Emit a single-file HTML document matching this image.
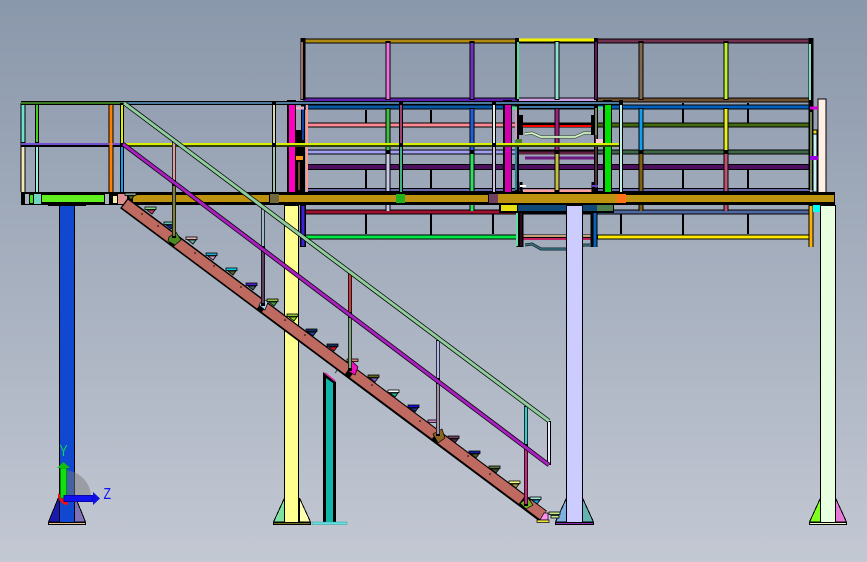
<!DOCTYPE html>
<html><head><meta charset="utf-8"><style>
html,body{margin:0;padding:0;width:867px;height:562px;overflow:hidden;background:#a5afbf}
svg{display:block}
.k path,.k rect,.k polygon{shape-rendering:crispEdges}
text{font-family:"Liberation Sans","DejaVu Sans",sans-serif}
</style></head><body>
<svg width="867" height="562" viewBox="0 0 867 562" xmlns="http://www.w3.org/2000/svg">
<defs><linearGradient id="bg" x1="0" y1="0" x2="0" y2="1"><stop offset="0" stop-color="#8a98ab"/><stop offset="1" stop-color="#c3c8d3"/></linearGradient></defs>
<rect width="867" height="562" fill="url(#bg)"/>

<g class="k" fill="none">
<!-- black bricks -->
<path stroke="#000" stroke-width="2" d="M366 110V123M431 110V125M366 170V190M431 170V190M366 214V234M431 214V236M493 214V234M683 103V125M748 103V124M683 170V190M748 170V190M621 214V234M683 214V236M748 214V234"/>
<!-- rear horizontal black casings -->
<path stroke="#000" stroke-width="5" d="M303 41H810M303 100H810M303 107H810M308 125H810M308 152H810M303 212H810M303 237H810"/>
<path stroke="#000" stroke-width="6" d="M308 167H810"/>
<path stroke="#000" stroke-width="4" d="M308 190H810"/>
<!-- top rails -->
<path stroke="#b08a10" stroke-width="3" d="M303 41H517"/>
<path stroke="#f0f000" stroke-width="3" d="M519 40H596"/>
<path stroke="#703050" stroke-width="3" d="M598 41H810"/>
<path stroke="#6020b0" stroke-width="3" d="M303 100H517"/>
<path stroke="#d0a0e8" stroke-width="3" d="M519 100H596"/>
<path stroke="#705030" stroke-width="3" d="M598 100H810"/>
<path stroke="#0858a8" stroke-width="3" d="M303 107H517"/>
<path stroke="#4078a8" stroke-width="2" d="M519 107H596"/>
<path stroke="#0060c0" stroke-width="3" d="M598 107H810"/>
<path stroke="#ff8a96" stroke-width="3" d="M308 125H517"/>
<path stroke="#ff0000" stroke-width="2" d="M519 126H596"/>
<path stroke="#446a10" stroke-width="3" d="M598 125H810"/>
<path stroke="#a0a0f0" stroke-width="3" d="M308 152H517"/>
<path stroke="#602040" stroke-width="3" d="M519 153H596"/>
<path stroke="#406848" stroke-width="3" d="M598 152H810"/>
<path stroke="#501060" stroke-width="4" d="M308 167H810"/>
<path stroke="#701880" stroke-width="3" d="M525 158H596"/>
<path stroke="#6468a8" stroke-width="2" d="M308 190H810"/>
<path stroke="#ffa09a" stroke-width="3" d="M523 191H596"/>
<path stroke="#a01030" stroke-width="3" d="M303 212H517"/>
<path stroke="#5068a0" stroke-width="3" d="M598 212H810"/>
<path stroke="#00e848" stroke-width="3" d="M303 237H517"/>
<path stroke="#c8a078" stroke-width="2" d="M519 236H596"/>
<path stroke="#c02060" stroke-width="2" d="M519 239H596"/>
<path stroke="#ffe800" stroke-width="3" d="M598 237H810"/>
<!-- rear upright casings -->
<path stroke="#000" stroke-width="5" d="M388 41V100M472 41V100M557 41V100M641 41V100M726 41V100"/>
<path stroke="#000" stroke-width="5" d="M388 108V192M472 108V192M557 108V192M641 108V192M726 108V192M388 205V211M472 205V211M641 205V211M726 205V211"/>
<path stroke="#f070e0" stroke-width="3" d="M388 43V99"/>
<path stroke="#7030c0" stroke-width="3" d="M472 43V99"/>
<path stroke="#90e0d0" stroke-width="3" d="M557 42V99"/>
<path stroke="#806848" stroke-width="3" d="M641 43V99"/>
<path stroke="#c0f030" stroke-width="3" d="M726 43V99"/>
<path stroke="#40c040" stroke-width="3" d="M388 109V150"/>
<path stroke="#c8c8e8" stroke-width="3" d="M388 154V191M388 205V211"/>
<path stroke="#2060e0" stroke-width="3" d="M472 109V150"/>
<path stroke="#30e060" stroke-width="3" d="M472 154V191M472 205V211"/>
<path stroke="#a02080" stroke-width="3" d="M557 109V150"/>
<path stroke="#c8c040" stroke-width="3" d="M557 154V190"/>
<path stroke="#10a0f0" stroke-width="3" d="M641 109V150"/>
<path stroke="#806010" stroke-width="3" d="M641 154V191M641 205V211"/>
<path stroke="#e8f020" stroke-width="3" d="M726 109V150"/>
<path stroke="#c05070" stroke-width="3" d="M726 154V191M726 205V211"/>
<!-- left rear post -->
<path stroke="#000" stroke-width="5" d="M303 38V100"/>
<path stroke="#a07060" stroke-width="2" d="M302 42V99"/>
<path stroke="#000" stroke-width="4" d="M303 104V192"/>
<path stroke="#1040a0" stroke-width="2" d="M303 108V140"/>
<path stroke="#000" stroke-width="6" d="M299 130V192"/>
<path stroke="#704828" stroke-width="2" d="M299 162V190"/>
<path stroke="#ff9a10" stroke-width="4" d="M296 158H303"/>
<path stroke="#e8b0c8" stroke-width="3" d="M296 108H304"/>
<path stroke="#000" stroke-width="6" d="M303 205V247"/>
<path stroke="#4020e0" stroke-width="3" d="M303 206V246"/>
<path stroke="#ff9a90" stroke-width="2" d="M307 104V191"/>
<!-- center dark posts -->
<path stroke="#000" stroke-width="4" d="M517 38V100M596 38V100"/>
<path stroke="#50e090" stroke-width="2" d="M518 42V99"/>
<path stroke="#601860" stroke-width="2" d="M596 42V99"/>
<path stroke="#000" stroke-width="4" d="M517 104V192M596 104V192"/>
<path stroke="#d098c0" stroke-width="2" d="M516 108V140"/>
<path stroke="#208098" stroke-width="2" d="M516 140V190"/>
<path stroke="#708060" stroke-width="2" d="M596 108V135"/>
<path stroke="#503040" stroke-width="2" d="M596 135V188"/>
<path stroke="#000" stroke-width="4" d="M521 115V135M593 115V135"/>
<path stroke="#000" stroke-width="3" d="M521 182V192M593 182V192"/>
<path stroke="#000" stroke-width="7" d="M520 205V247M594 205V247"/>
<path stroke="#60e0a0" stroke-width="2" d="M517 206V246"/>
<path stroke="#2a0a20" stroke-width="2" d="M521 210V246"/>
<path stroke="#0860b8" stroke-width="3" d="M595 208V247"/>
<path stroke="#50e080" stroke-width="3" d="M512 108H517M598 108H603"/>
<path stroke="#4e7a30" stroke-width="4" d="M516 141H522"/>
<path stroke="#ffc8d8" stroke-width="4" d="M596 141H603"/>
<path stroke="#fff" stroke-width="2" d="M520 186H526"/>
<path stroke="#6040c0" stroke-width="2" d="M592 186H598"/>
<!-- right end -->
<path stroke="#000" stroke-width="5" d="M811 38V190"/>
<path stroke="#80e0c0" stroke-width="2" d="M810 44V100"/>
<path stroke="#708050" stroke-width="2" d="M811 112V190"/>
<rect x="818" y="99" width="8" height="94" fill="#ffefe5" stroke="#000"/>
<rect x="813" y="131" width="4" height="61" fill="#c8f4f4" stroke="#000"/>
<rect x="813" y="130" width="4" height="4" fill="#f0e020" stroke="#000"/>
<path stroke="#d000d0" stroke-width="3" d="M810 108H818"/>
<path stroke="#a000e0" stroke-width="4" d="M810 158H818"/>
<path stroke="#000" stroke-width="5" d="M811 205V247"/>
<path stroke="#ffb000" stroke-width="3" d="M811 206V247"/>
<!-- magenta and green columns -->
<rect x="287" y="100" width="9" height="93" fill="#000"/><rect x="289" y="102" width="6" height="91" fill="#ff00c0"/>
<rect x="503" y="100" width="9" height="93" fill="#000"/><rect x="505" y="102" width="6" height="91" fill="#d000b0"/>
<rect x="603" y="100" width="9" height="93" fill="#000"/><rect x="605" y="102" width="6" height="91" fill="#00e000"/>
<!-- front rail, mid rail -->
<path stroke="#000" stroke-width="4" d="M123 103H620"/>
<path stroke="#4c7a9c" stroke-width="2" d="M123 103H620"/>
<path stroke="#30400c" stroke-width="4" d="M123 145H620"/>
<path stroke="#d8f000" stroke-width="2" d="M123 144H620"/>
<!-- front posts -->
<path stroke="#000" stroke-width="4" d="M274 102V192M401 102V192M494 102V192M621 100V192"/>
<path stroke="#d8d8b0" stroke-width="2" d="M274 105V143"/>
<path stroke="#a0c0b0" stroke-width="2" d="M274 147V192"/>
<path stroke="#a04070" stroke-width="2" d="M401 105V143"/>
<path stroke="#40b080" stroke-width="2" d="M401 147V192"/>
<path stroke="#e0f0e8" stroke-width="2" d="M494 105V143"/>
<path stroke="#d0c0e0" stroke-width="2" d="M494 147V192"/>
<path stroke="#c0f0e0" stroke-width="2" d="M621 105V192"/>
<!-- left bay -->
<path stroke="#000" stroke-width="5" d="M23 103V192M111 103V192"/>
<path stroke="#000" stroke-width="4" d="M37 103V192"/>
<path stroke="#000" stroke-width="4" d="M21 103H123"/>
<path stroke="#3a7a20" stroke-width="2" d="M21 103H123"/>
<path stroke="#000" stroke-width="4" d="M21 145H123"/>
<path stroke="#7050d0" stroke-width="2" d="M21 144H123"/>
<path stroke="#70e0d0" stroke-width="3" d="M23 105V142"/>
<path stroke="#f0e8b8" stroke-width="3" d="M23 147V192"/>
<path stroke="#40d020" stroke-width="2" d="M37 105V142"/>
<path stroke="#a0f0e0" stroke-width="2" d="M37 147V194"/>
<path stroke="#ff8000" stroke-width="3" d="M111 105V192"/>
<path stroke="#000" stroke-width="4" d="M122 103V192"/>
<path stroke="#e0f000" stroke-width="2" d="M122 105V143"/>
<path stroke="#10a0f0" stroke-width="2" d="M122 147V204"/>
<!-- deck -->
<rect x="21" y="192" width="814" height="13" fill="#000"/>
<rect x="133" y="195" width="136" height="7" fill="#bc920e"/>
<rect x="279" y="195" width="209" height="7" fill="#bc920e"/>
<rect x="498" y="194" width="119" height="9" fill="#bc920e"/>
<rect x="626" y="195" width="208" height="7" fill="#bc920e"/>
<rect x="270" y="194" width="9" height="9" fill="#706840"/>
<rect x="396" y="194" width="9" height="9" fill="#20b020"/>
<rect x="489" y="194" width="9" height="9" fill="#704060"/>
<rect x="617" y="194" width="9" height="9" fill="#ff7018"/>
<rect x="25" y="194" width="4" height="10" fill="#a8b4c0"/>
<rect x="30" y="195" width="3" height="8" fill="#40e020"/>
<rect x="34" y="194" width="7" height="10" fill="#70d8c0"/>
<rect x="42" y="195" width="62" height="7" fill="#60f020"/>
<rect x="105" y="194" width="4" height="10" fill="#a8b4c0"/>
<rect x="113" y="196" width="4" height="7" fill="#f8f0a0"/>
<rect x="118" y="194" width="9" height="10" fill="#e09090"/>
<!-- under deck blocks -->
<rect x="499" y="205" width="115" height="8" fill="#000"/>
<rect x="501" y="205" width="16" height="6" fill="#e8e010"/>
<rect x="518" y="205" width="49" height="6" fill="#104878"/>
<rect x="583" y="205" width="14" height="6" fill="#104878"/>
<rect x="597" y="205" width="16" height="6" fill="#508050"/>
<rect x="813" y="205" width="8" height="7" fill="#00ffff"/>
<rect x="48" y="205" width="38" height="1" fill="#000"/>
</g>

<!-- wave lines -->
<g fill="none">
<path d="M525 134L532 133L541 137H575L584 133H591" stroke="#28402a" stroke-width="3"/>
<path d="M525 134L532 133L541 137H575L584 133H591" stroke="#d8f4c8" stroke-width="1.800"/>
<path d="M525 245L532 244L541 249H575L584 245H591" stroke="#122a30" stroke-width="3"/>
<path d="M525 245L532 244L541 249H575L584 245H591" stroke="#387080" stroke-width="1.500"/>
</g>

<!-- columns and bases -->
<g class="k" stroke="#000">
<rect x="59.500" y="205.500" width="15" height="318" fill="#1048d0"/>
<polygon points="59.500,495 59.500,522 48.500,522" fill="#1a1ab0"/>
<polygon points="74.500,495 74.500,522 85.500,522" fill="#8070b8"/>
<rect x="48.500" y="522.500" width="37" height="2" fill="#e8c090"/>

<rect x="284.500" y="205.500" width="14" height="318" fill="#ffff90"/>
<polygon points="284.500,498 284.500,522 273.500,522" fill="#80e0a0"/>
<polygon points="299.500,498 299.500,522 310.500,522" fill="#ffffb0"/>
<rect x="273.500" y="522.500" width="37" height="2" fill="#707020"/>

<rect x="566.500" y="205.500" width="16" height="318" fill="#ccccff"/>
<polygon points="566.500,498 566.500,522 555.500,522" fill="#80b0e0"/>
<polygon points="582.500,498 582.500,522 593.500,522" fill="#66b3b3"/>
<rect x="555.500" y="522.500" width="38" height="2" fill="#9030b0"/>

<rect x="820.500" y="205.500" width="15" height="318" fill="#e8ffe0"/>
<polygon points="820.500,498 820.500,522 809.500,522" fill="#80ff20"/>
<polygon points="835.500,498 835.500,522 846.500,522" fill="#e878d8"/>
<rect x="809.500" y="522.500" width="37" height="2" fill="#f0ffd0"/>
</g>

<!-- teal support -->
<g>
<polygon points="323,522 323,372 336,382 336,522" fill="#000"/>
<polygon points="326,522 326,378 333,383 333,522" fill="#10b4a8"/>
<path d="M325 373L335 381" stroke="#e020a0" stroke-width="1.500"/>
<rect x="312" y="522" width="35" height="2.500" fill="#60e0e0" stroke="#3a9a9a" stroke-width=".5"/>
<path d="M335 373C340 368 333 367 340 360" fill="none" stroke="#304030" stroke-width="1"/>
</g>

<!-- stair treads -->
<g stroke="#000" stroke-width=".8">
<polygon points="128,196 134,196 131,200" fill="#4a7a20"/><rect x="125" y="193" width="11" height="2.500" fill="#8a9a8a"/>
<polygon points="147,210 155,210 152,214" fill="#c04060"/><rect x="145" y="207" width="11" height="2.500" fill="#80d880"/>
<polygon points="166,225 174,225 171,229" fill="#1030a0"/><rect x="164" y="222" width="11" height="2.500" fill="#60c0b0"/>
<polygon points="188,240 196,240 193,244" fill="#60b0a0"/><rect x="186" y="237" width="11" height="2.500" fill="#e8b0b8"/>
<polygon points="208,256 216,256 213,260" fill="#d090c0"/><rect x="206" y="253" width="11" height="2.500" fill="#20a8d0"/>
<polygon points="228,271 236,271 233,275" fill="#606020"/><rect x="226" y="268" width="11" height="2.500" fill="#00d0e8"/>
<polygon points="248,286 256,286 253,290" fill="#406060"/><rect x="246" y="283" width="11" height="2.500" fill="#5020d0"/>
<polygon points="269,302 277,302 274,306" fill="#40a040"/><rect x="267" y="299" width="11" height="2.500" fill="#90c040"/>
<polygon points="289,317 297,317 294,321" fill="#90d020"/><rect x="287" y="314" width="11" height="2.500" fill="#90c040"/>
<polygon points="308,332 316,332 313,336" fill="#2040a0"/><rect x="306" y="329" width="11" height="2.500" fill="#103060"/>
<polygon points="329,347 337,347 334,351" fill="#e01020"/><rect x="327" y="344" width="11" height="2.500" fill="#103060"/>
<rect x="347" y="359" width="11" height="2.500" fill="#e08070"/>
<polygon points="370,378 378,378 375,382" fill="#8060c0"/><rect x="368" y="375" width="11" height="2.500" fill="#606020"/>
<polygon points="390,393 398,393 395,397" fill="#20b090"/><rect x="388" y="390" width="11" height="2.500" fill="#fff"/>
<polygon points="410,408 418,408 415,412" fill="#203080"/><rect x="408" y="405" width="11" height="2.500" fill="#1010e0"/>
<rect x="428" y="420" width="11" height="2.500" fill="#d080d0"/>
<polygon points="450,439 458,439 455,443" fill="#503040"/><rect x="448" y="436" width="11" height="2.500" fill="#704060"/>
<polygon points="471,454 479,454 476,458" fill="#506020"/><rect x="469" y="451" width="11" height="2.500" fill="#1020a0"/>
<polygon points="491,469 499,469 496,473" fill="#405030"/><rect x="489" y="466" width="11" height="2.500" fill="#607040"/>
<polygon points="511,484 519,484 516,488" fill="#a0a040"/><rect x="509" y="481" width="11" height="2.500" fill="#ffff80"/>
<polygon points="532,500 540,500 537,504" fill="#10a0e0"/><rect x="530" y="497" width="11" height="2.500" fill="#a0e8e0"/>
<rect x="549" y="512" width="11" height="2.500" fill="#c8e890"/><rect x="551" y="515.500" width="8" height="2.500" fill="#c8e890"/>
</g>

<!-- stringer -->
<g fill="none">
<path d="M124 203L543 516" stroke="#000" stroke-width="13"/>
<path d="M125 203.700L172 238.800M177 242.500L260 304.500M265 308L348 370M353 373.500L435 434.800M440 438.500L522 499.800M528 504L543 515.200" stroke="#bf6a60" stroke-width="10"/>
</g>
<g stroke="#000" stroke-width=".7">
<polygon points="169,237 176,232 181,240 175,245 168,241" fill="#4a8a20"/>
<polygon points="259,305 265,310 268,302 263,299" fill="#a0d0f0"/>
<polygon points="348,371 355,375 358,367 352,361" fill="#f010c0"/>
<polygon points="433,434 442,429 445,438 438,443" fill="#8a6420"/>
<polygon points="520,503 528,498 533,505 526,509" fill="#70b020"/>
<polygon points="540,520 548,520 548,513 544,513" fill="#ff90f0"/>
<rect x="537" y="520" width="12" height="2.500" fill="#f0e040"/>
</g>
<g fill="#000">
<circle cx="142" cy="214" r=".8"/><circle cx="158" cy="226" r=".8"/><circle cx="195" cy="253" r=".8"/><circle cx="214" cy="266" r=".8"/><circle cx="241" cy="287" r=".8"/><circle cx="285" cy="320" r=".8"/><circle cx="305" cy="335" r=".8"/><circle cx="372" cy="385" r=".8"/><circle cx="420" cy="421" r=".8"/><circle cx="468" cy="456" r=".8"/><circle cx="490" cy="474" r=".8"/>
</g>

<!-- handrails -->
<g fill="none">
<path d="M174 140V238M263 207V306M350 273V371M438 340V436M526 406V506" stroke="#000" stroke-width="4"/>
<path d="M174 141V180" stroke="#d8a0a0" stroke-width="2.500"/>
<path d="M174 186V236" stroke="#808040" stroke-width="2.500"/>
<path d="M263 208V246" stroke="#a0b8c8" stroke-width="2.500"/>
<path d="M263 252V303" stroke="#604060" stroke-width="2.500"/>
<path d="M350 274V312" stroke="#c04040" stroke-width="2.500"/>
<path d="M350 318V368" stroke="#80a080" stroke-width="2.500"/>
<path d="M438 341V378" stroke="#b8b8e8" stroke-width="2.500"/>
<path d="M438 384V434" stroke="#a090a8" stroke-width="2.500"/>
<path d="M526 407V444" stroke="#40c8c8" stroke-width="2.500"/>
<path d="M526 450V504" stroke="#c0307f" stroke-width="2.500"/>
<path d="M549 421V465" stroke="#000" stroke-width="4"/>
<path d="M549 422V464" stroke="#e8e8ff" stroke-width="2"/>
<path d="M124 103L549 421" stroke="#000" stroke-width="4.500"/>
<path d="M124 103L549 421" stroke="#90cc9c" stroke-width="3"/>
<path d="M123 144L549 465" stroke="#000" stroke-width="4.500"/>
<path d="M123 144L549 465" stroke="#a820c0" stroke-width="3"/>
</g>

<!-- triad -->
<path d="M63 470A28 27 0 0 1 91 497H63Z" fill="#7a7a7a" fill-opacity=".5"/>
<path d="M60 494A8 8 0 0 0 68 503" fill="none" stroke="#f01010" stroke-width="4"/>
<rect x="60.500" y="468" width="6" height="30" fill="#10e010" stroke="#0a8a0a" stroke-width="1"/>
<polygon points="63.500,462 70,468 57,468" fill="#10c010"/>
<rect x="64" y="495.500" width="29" height="6" fill="#1010f0" stroke="#0808a0" stroke-width="1"/>
<polygon points="100,498.500 93,492 93,505" fill="#1010e0"/>
<text x="59.500" y="456" font-size="16" textLength="8" lengthAdjust="spacingAndGlyphs" fill="#10d060">Y</text>
<text x="103.500" y="499" font-size="16" textLength="7.500" lengthAdjust="spacingAndGlyphs" fill="#1010f0">Z</text>
</svg>
</body></html>
